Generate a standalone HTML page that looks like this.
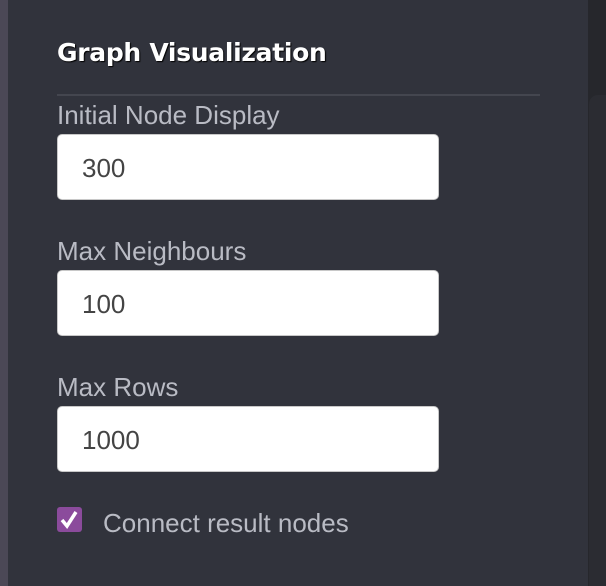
<!DOCTYPE html>
<html><head><style>
body{margin:0;width:606px;height:586px;background:#31333c;position:relative;overflow:hidden;font-family:"Liberation Sans",sans-serif}
.ls{position:absolute;left:0;top:0;width:8px;height:586px;background:#4b4856}
.rs{position:absolute;left:588px;top:0;width:18px;height:586px;background:#26272c}
.th{position:absolute;left:589px;top:95px;width:17px;height:491px;background:#2b2c32;border-radius:9px 0 0 0}
h1{position:absolute;left:57px;top:38px;margin:0;font-family:"DejaVu Sans",sans-serif;font-weight:bold;font-size:25px;color:#fff;text-shadow:1px 1px 1px #000;letter-spacing:-0.3px}
.hr{position:absolute;left:57px;top:94px;width:483px;height:2px;background:#44464f}
.lb{position:absolute;left:57px;font-size:26px;color:#b9bbc4}
.in{position:absolute;left:57px;width:380px;height:64px;background:#fff;border:1px solid #c8c8c8;border-radius:5px;box-sizing:content-box}
.in span{position:absolute;left:24px;top:18px;font-size:26px;color:#444}
.cb{position:absolute;left:57px;top:507px;width:25px;height:25px;background:#8b4b9c;border-radius:3px}
</style></head><body>
<div class="ls"></div><div class="rs"></div><div class="th"></div>
<h1>Graph Visualization</h1>
<div class="hr"></div>
<div class="lb" style="top:100px">Initial Node Display</div>
<div class="in" style="top:134px"><span>300</span></div>
<div class="lb" style="top:236px">Max Neighbours</div>
<div class="in" style="top:270px"><span>100</span></div>
<div class="lb" style="top:372px">Max Rows</div>
<div class="in" style="top:406px"><span>1000</span></div>
<div class="cb"><svg width="25" height="25" viewBox="0 0 25 25"><path d="M5 13 L10 19 L19 5" stroke="#fff" stroke-width="3.5" fill="none"/></svg></div>
<div class="lb" style="left:103px;top:508px">Connect result nodes</div>
</body></html>
